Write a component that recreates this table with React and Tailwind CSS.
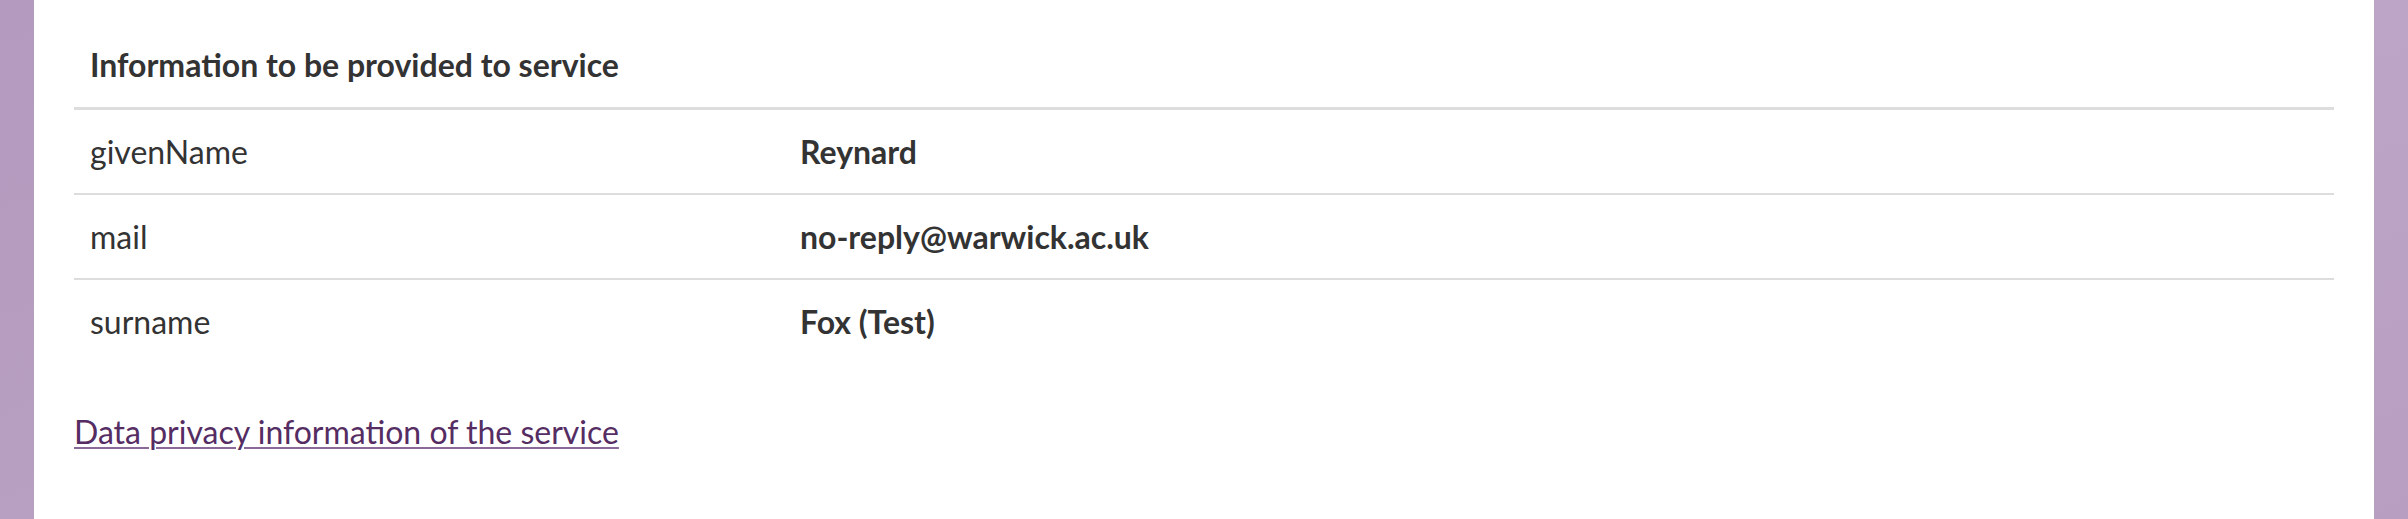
import React from "react";

const rows = [
  { name: "givenName", value: "Reynard" },
  { name: "mail", value: "no-reply@warwick.ac.uk" },
  { name: "surname", value: "Fox (Test)" },
];

export default function App() {
  return (
    <div className="flex min-h-[519px] bg-[linear-gradient(160deg,#b39abe_0%,#b79fc1_35%,#bda6c7_55%,#b89fc1_100%)] px-[34px] font-['Lato',sans-serif] text-[#333333]">
      <div className="flex-1 bg-white px-[40px]">
        <table className="w-full border-collapse">
          <thead>
            <tr>
              <th
                colSpan={2}
                className="border-b-[3px] border-[#dddddd] px-4 pt-[41px] pb-[18px] text-left text-[32px] leading-[48px] font-bold"
              >
                Information to be provided to service
              </th>
            </tr>
          </thead>
          <tbody>
            {rows.map((r) => (
              <tr key={r.name} className="border-b-2 border-[#dddddd] last:border-b-0">
                <td className="w-[710px] px-4 pt-[18px] pb-[17px] text-[32px] leading-[48px]">
                  {r.name}
                </td>
                <td className="px-4 pt-[18px] pb-[17px] text-[32px] leading-[48px] font-bold">
                  {r.value}
                </td>
              </tr>
            ))}
          </tbody>
        </table>

        <a
          href="#"
          className="mt-[45px] inline-block text-[32px] leading-[48px] text-[#552d63] underline decoration-[#8a6898] decoration-2 underline-offset-[3px]"
        >
          Data privacy information of the service
        </a>
      </div>
    </div>
  );
}
